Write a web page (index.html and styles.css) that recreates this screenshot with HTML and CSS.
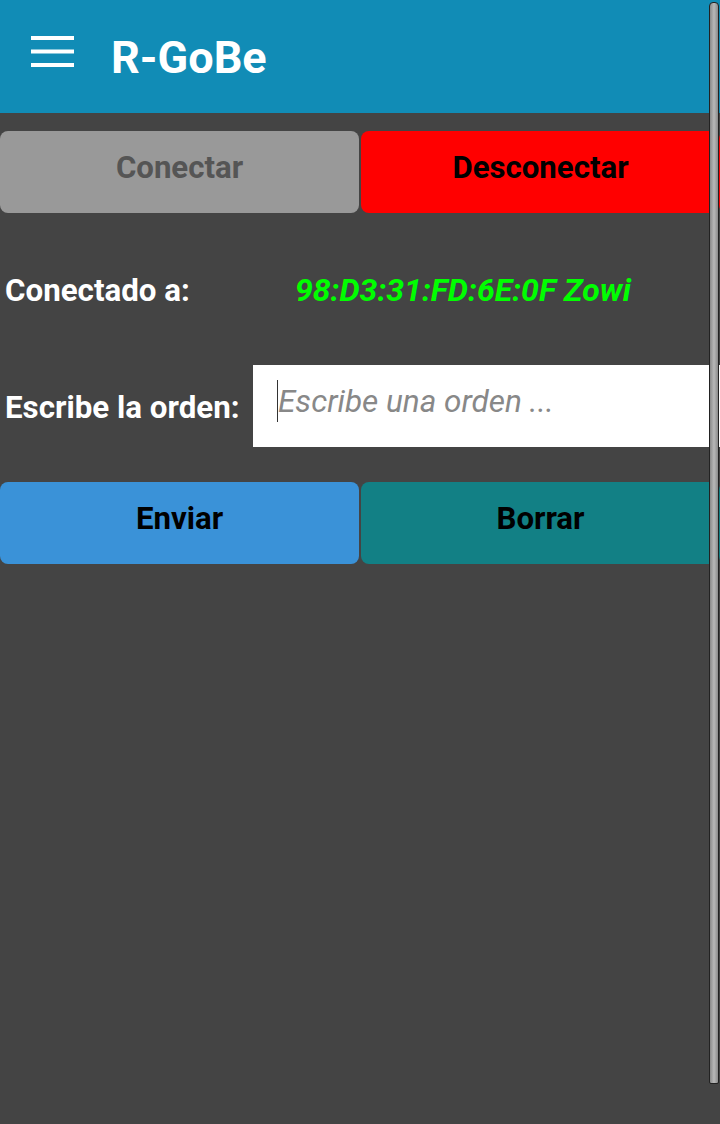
FILE: index.html
```html
<!DOCTYPE html>
<html>
<head>
<meta charset="utf-8">
<link rel="stylesheet" href="styles.css">
</head>
<body>
<div class="app">
  <header class="topbar">
    <svg class="menu" width="44" height="32" viewBox="0 0 44 32">
      <rect x="0" y="0" width="43" height="4" fill="#fff"/>
      <rect x="0" y="13.5" width="43" height="4" fill="#fff"/>
      <rect x="0" y="27" width="43" height="4" fill="#fff"/>
    </svg>
    <h1 class="title">R-GoBe</h1>
  </header>
  <main class="content">
    <div class="btn-row first">
      <button class="btn btn-gray">Conectar</button>
      <button class="btn btn-red">Desconectar</button>
    </div>
    <div class="status-row">
      <span class="label">Conectado a:</span>
      <span class="mac">98:D3:31:FD:6E:0F Zowi</span>
    </div>
    <div class="input-row">
      <span class="label">Escribe la orden:</span>
      <div class="input-box"><span class="caret"></span><span class="placeholder">Escribe una orden ...</span></div>
    </div>
    <div class="btn-row">
      <button class="btn btn-blue">Enviar</button>
      <button class="btn btn-teal">Borrar</button>
    </div>
  </main>
  <div class="scrollbar"></div>
</div>
</body>
</html>
```

FILE: styles.css
```css
html, body {
  margin: 0;
  padding: 0;
  background: #444444;
}
.app {
  position: relative;
  width: 720px;
  height: 1124px;
  overflow: hidden;
  font-family: Roboto, "Liberation Sans", sans-serif;
  background: #444444;
}
.topbar {
  height: 113px;
  background: #118cb6;
  display: flex;
  align-items: center;
}
.menu {
  margin-left: 31px;
  margin-top: -10px;
}
.title {
  margin: 0 0 0 36px;
  color: #fff;
  font-size: 45px;
  font-weight: 700;
  line-height: 1;
  margin-top: 2px;
}
.content {
  display: flex;
  flex-direction: column;
}
.btn-row {
  display: flex;
  gap: 2px;
  height: 82px;
}
.btn-row.first {
  margin-top: 18px;
}
.btn {
  flex: 0 0 359px;
  border: none;
  border-radius: 8px;
  font-family: Roboto, "Liberation Sans", sans-serif;
  font-size: 31.2px;
  font-weight: 700;
  color: #000;
  padding: 0 0 9px 0;
  margin: 0;
}
.btn-gray { background: #999999; color: #555555; }
.btn-red { background: #ff0000; }
.btn-blue { background: #3a92d8; }
.btn-teal { background: #128085; }
.status-row {
  display: flex;
  align-items: center;
  height: 70px;
  margin-top: 42px;
}
.label {
  color: #fff;
  font-size: 31.3px;
  font-weight: 700;
  padding-left: 5px;
}
.mac {
  color: #00ff00;
  font-size: 32px;
  font-weight: 700;
  font-style: italic;
  margin-left: 105px;
}
.input-row {
  display: flex;
  align-items: center;
  margin-top: 40px;
  margin-bottom: 35px;
}
.input-row .label {
  width: 248px;
  flex: 0 0 248px;
  margin-top: 2px;
}
.input-box {
  flex: 1;
  height: 82px;
  background: #fff;
  display: flex;
  align-items: center;
  padding-left: 24px;
  position: relative;
}
.caret {
  display: inline-block;
  width: 1px;
  height: 42px;
  background: #333;
  margin-top: -10px;
}
.placeholder {
  color: #888;
  font-size: 31.5px;
  font-style: italic;
  margin-top: -10px;
}
.scrollbar {
  position: absolute;
  top: 2px;
  left: 709px;
  width: 8px;
  height: 1080px;
  border: 1px solid #222;
  border-radius: 4px 4px 2px 2px;
  background: linear-gradient(to right, #8a8a8a, #b8b8b8 50%, #8a8a8a);
}
```
